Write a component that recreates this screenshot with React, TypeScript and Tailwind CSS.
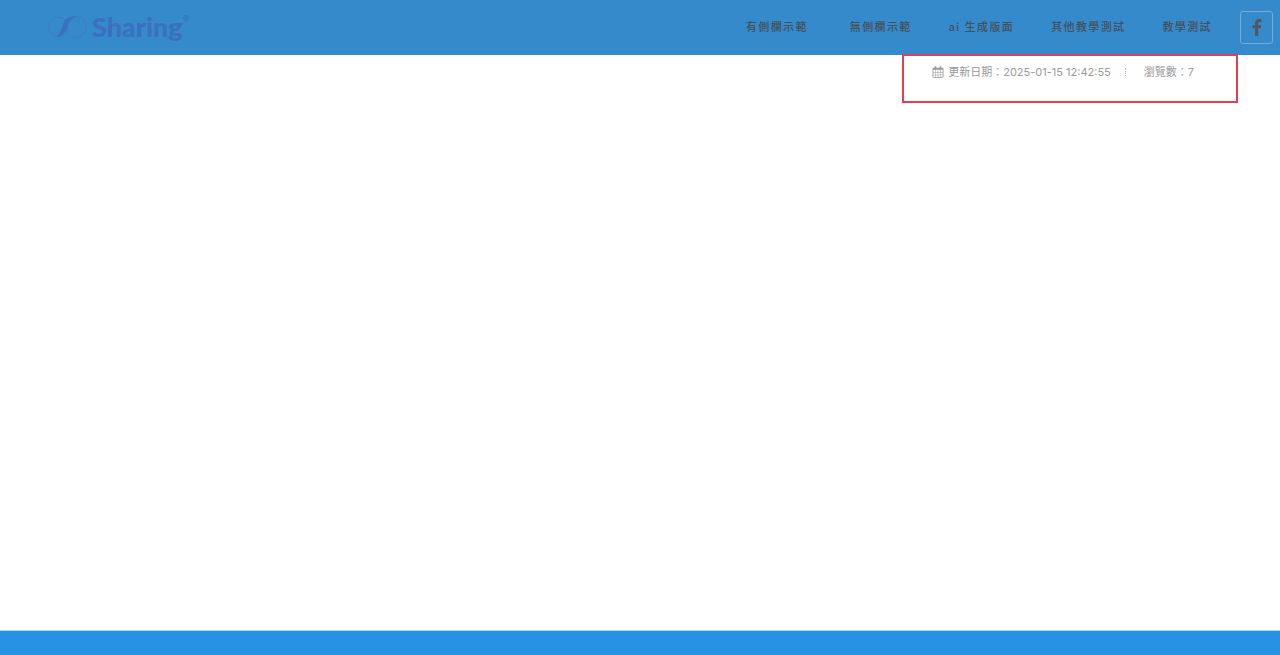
const navItems = [
  { label: "有側欄示範", className: "mr-[42px]" },
  { label: "無側欄示範", className: "mr-[37px]" },
  { label: "ai 生成版面", className: "mr-[37px]" },
  { label: "其他教學測試", className: "mr-[37px]" },
  { label: "教學測試", className: "mr-7" },
];

function Logo() {
  return (
    <a href="#" className="flex items-center pb-0.5 text-[#3a70bf]">
      <svg width="40" height="24" viewBox="0 0 40 24" fill="none" className="mr-1" aria-hidden="true">
        <circle cx="10.5" cy="12" r="9.8" stroke="currentColor" strokeWidth="0.6" opacity="0.7" />
        <circle cx="28" cy="12" r="10.5" stroke="currentColor" strokeWidth="0.6" opacity="0.7" />
        <path
          d="M8 21.8C14 22.6 17.5 17.5 19.5 12C21.5 6 24 2.2 29.5 1.7C22.5 0 17.5 3 15 9.5C13 15 12 20 8 21.8Z"
          fill="currentColor"
        />
      </svg>
      <span className="font-['Lato',sans-serif] text-[27px] leading-8 font-black">Sharing</span>
      <span className="self-start text-[9px] leading-4">®</span>
    </a>
  );
}

function FacebookIcon() {
  return (
    <svg width="10" height="17" viewBox="0 0 10 17" fill="currentColor" aria-hidden="true">
      <path d="M9.4.2v2.7H7.8C6.6 2.9 6.3 3.5 6.3 4.3v1.9h3l-.4 3h-2.6V17H3.1V9.2H.5v-3h2.6V4C3.1 1.4 4.7 0 7 0c1.1 0 2.1.1 2.4.2Z" />
    </svg>
  );
}

function CalendarIcon() {
  return (
    <svg width="12" height="12" viewBox="0 0 12 12" fill="none" stroke="currentColor" aria-hidden="true">
      <rect x="0.9" y="2" width="10.2" height="9.5" rx="0.5" strokeWidth="0.8" />
      <path d="M1 3h10" strokeWidth="1.6" />
      <path d="M1 6.5h10M1 9h10M3.5 4v7.5M6 4v7.5M8.5 4v7.5" strokeWidth="0.5" />
      <path d="M3.5 0.8v2M8.5 0.8v2" strokeWidth="1.5" strokeLinecap="round" />
    </svg>
  );
}

export default function App() {
  return (
    <div className="flex min-h-screen flex-col bg-white font-['Inter','Noto_Sans_CJK_TC',sans-serif]">
      <header className="flex h-[55px] items-center justify-between bg-[#358acb] pr-[7px] pl-12">
        <Logo />
        <div className="flex items-center">
          <nav className="flex items-center pb-0.5 text-[11px] leading-4 font-medium tracking-[0.125em] whitespace-nowrap text-[#46505a]">
            {navItems.map((item) => (
              <a key={item.label} href="#" className={`${item.className} hover:text-white`}>
                {item.label}
              </a>
            ))}
          </nav>
          <a
            href="#"
            aria-label="Facebook"
            className="flex size-[33px] items-center justify-center rounded-[3px] border border-[#79a9cf] text-[#50585f]"
          >
            <FacebookIcon />
          </a>
        </div>
      </header>

      <main className="flex-1">
        {/* Page info, overlaps the header's bottom edge by its border */}
        <div className="relative -mt-px mr-[42px] ml-auto flex h-[49px] w-fit items-start border-2 border-[#e33e52] pt-2 pr-[42px] pl-7 text-[11px] leading-4 whitespace-nowrap text-[#999]">
          <span className="flex items-center gap-1">
            <CalendarIcon />
            <span>更新日期：2025-01-15 12:42:55</span>
          </span>
          <span className="mx-3.5 mt-1 h-2 border-l border-dotted border-[#bbb]" />
          <span className="ml-1">瀏覽數：7</span>
        </div>
      </main>

      <footer className="h-[25px] border-t border-[#a5ddf5] bg-[#2791e4]" />
    </div>
  );
}
